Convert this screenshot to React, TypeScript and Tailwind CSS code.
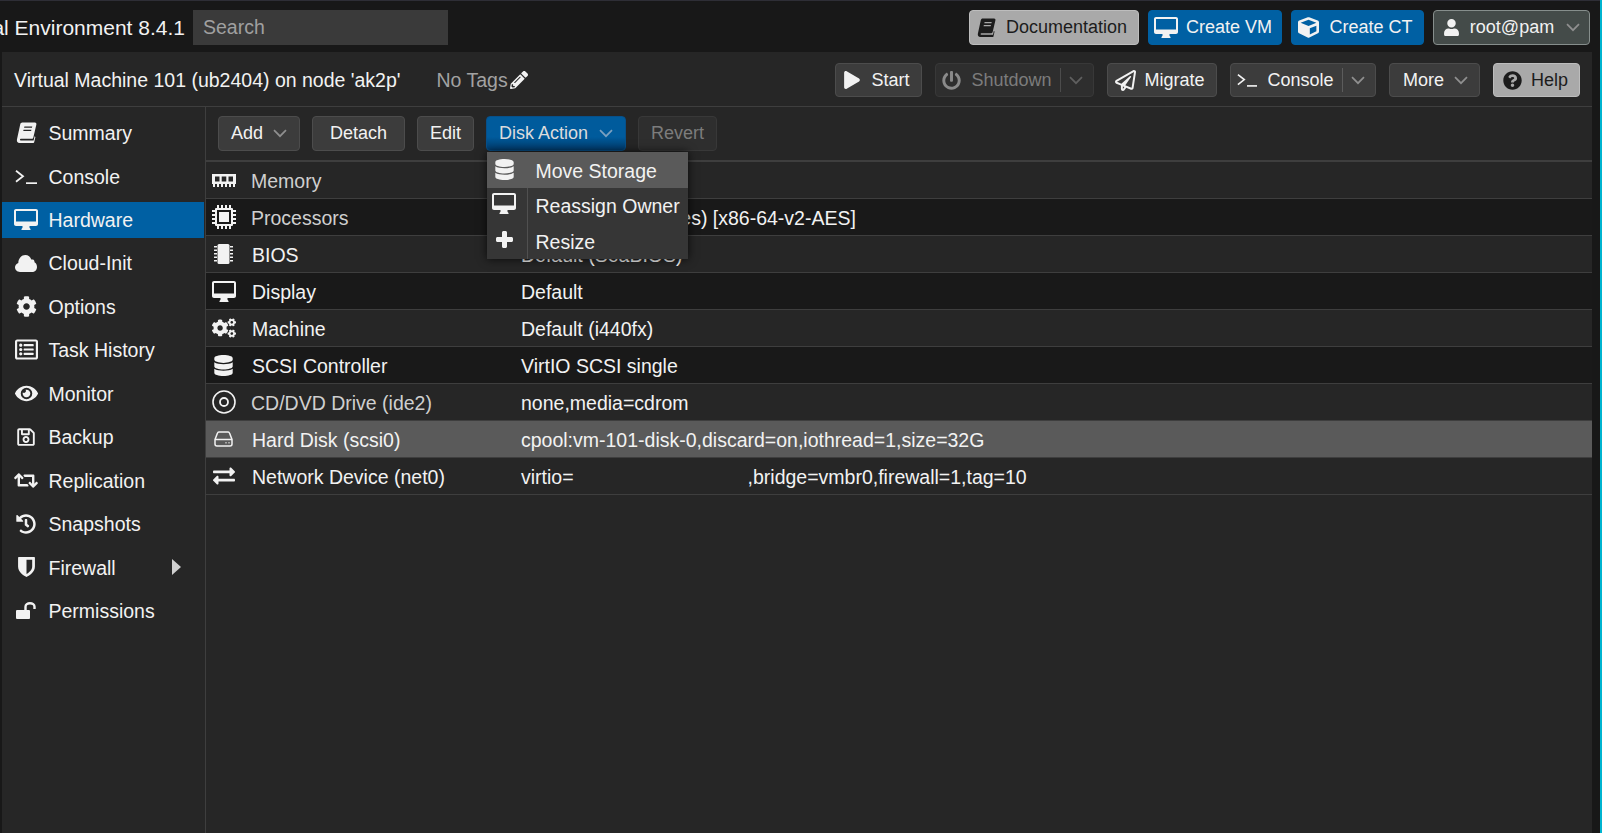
import type { ReactNode } from "react";
import {
  FaCogs, FaCube, FaCog, FaDatabase, FaEye, FaExchangeAlt, FaHistory, FaPencilAlt, FaPlay,
  FaPowerOff, FaQuestionCircle, FaRegListAlt, FaRegPaperPlane, FaRegSave, FaRetweet, FaUser,
} from "react-icons/fa";

function Chevron({ className = "text-[#8f8f8f]" }: { className?: string }) {
  return (
    <svg width="14" height="9" viewBox="0 0 14 9" fill="none" stroke="currentColor" strokeWidth="1.7" className={className}>
      <path d="M1 1.2l6 6 6-6" />
    </svg>
  );
}

function BookIcon({ size = 21 }: { size?: number }) {
  return (
    <svg width={size} height={size} viewBox="0 0 20 20" fill="currentColor">
      <path fillRule="evenodd" d="M6 .5h12c1 0 1.6.8 1.4 1.8l-2.9 12.5c-.2.8-.6 1.2-1.3 1.2H4.6c-1 0-1.2 1.6 0 1.6h12.2l.9-4 .8.6-1.2 5.2c-.1.5-.4.6-.8.6H3.4C1.600 20 .5 18.500.9 16.600L4 2.300C4.300 1.200 5 .5 6 .5zM8 4.200l-.3 1.300h7.500l.3-1.300H8zM7.200 7.300l-.3 1.300h7.500l.3-1.300H7.200z" />
    </svg>
  );
}

function TerminalIcon({ size = 22 }: { size?: number }) {
  return (
    <svg width={size} height={size * 0.7} viewBox="0 0 22 15" fill="none" stroke="currentColor" strokeWidth="1.8">
      <path d="M1 1.500l7 5.500-7 5.500" />
      <path d="M11 14h11" />
    </svg>
  );
}

function DesktopIcon({ size = 24 }: { size?: number }) {
  return (
    <svg width={size} height={size * 0.875} viewBox="0 0 24 21" fill="currentColor">
      <path fillRule="evenodd" d="M2 0h20c1.100 0 2 .9 2 2v13c0 1.100-.9 2-2 2h-6.500v1.700l1 1.300v1H7.500v-1l1-1.300V17H2c-1.100 0-2-.9-2-2V2C0 .9.900 0 2 0zm0 2v10.500h20V2H2z" />
    </svg>
  );
}

function CloudIcon() {
  return (
    <svg width="22" height="17" viewBox="0 0 22 17" fill="currentColor">
      <path d="M5 17C2.200 17 0 14.900 0 12.300c0-2.100 1.300-3.800 3.300-4.400C3.500 3.500 6.500 0 10.300 0c2.900 0 5.200 1.800 6 4.600 .5-.2 1-.3 1.500-.1 1.200.3 1.800 1.400 1.700 2.700C21 8 22 9.800 22 11.900 22 14.800 19.800 17 17 17H5z" />
    </svg>
  );
}

function ShieldIcon() {
  return (
    <svg width="17" height="20" viewBox="0 0 16 19" fill="currentColor">
      <path fillRule="evenodd" d="M.6 0h14.800c.3 0 .6.300.6.600V9c0 5-5 8.500-8 10C5 17.500 0 14 0 9V.6C0 .3.300 0 .6 0zM8 2.600v13.600c2.500-1.500 5.400-4 5.400-7.200V2.600H8z" />
    </svg>
  );
}

function UnlockIcon() {
  return (
    <svg width="21" height="17" viewBox="0 0 21 17" fill="currentColor">
      <rect x="0" y="8" width="14" height="9" rx="1" />
      <path d="M9.500 9V4.800a4.500 3.600 0 0 1 9 0V7" fill="none" stroke="currentColor" strokeWidth="2.400" />
    </svg>
  );
}

function DiskIcon() {
  return (
    <svg width="19" height="16" viewBox="0 0 19 16" fill="none" stroke="currentColor" strokeWidth="1.500">
      <path d="M1 8.500L3.500 2c.2-.6.700-1 1.300-1h9.400c.6 0 1.100.4 1.300 1L18 8.500V13c0 1.100-.9 2-2 2H3c-1.100 0-2-.9-2-2V8.500zM1 8.500h17" />
      <path d="M11.500 11.800h1M14.500 11.800h1" />
    </svg>
  );
}

function PlusIcon() {
  return (
    <svg width="17" height="17" viewBox="0 0 17 17" fill="currentColor">
      <path d="M7.500 0h2c.8 0 1.500.7 1.500 1.500V6h4.500c.8 0 1.500.7 1.500 1.500v2c0 .8-.7 1.500-1.500 1.500H11v4.500c0 .8-.7 1.500-1.500 1.500h-2C6.700 17 6 16.300 6 15.500V11H1.500C.7 11 0 10.300 0 9.500v-2C0 6.700.7 6 1.500 6H6V1.500C6 .7 6.700 0 7.500 0z" />
    </svg>
  );
}

function MemoryIcon() {
  return (
    <svg width="24" height="13" viewBox="0 0 24 13" fill="currentColor">
      <path fillRule="evenodd" d="M0 0h24v10H0V0zm3 2.500v5h4.500v-5H3zm6.700 0v5h4.600v-5H9.700zm6.800 0v5H21v-5h-4.500z" />
      <path d="M1 10h2v3H1zM5 10h2v3H5zM9 10h2v3H9zM13 10h2v3h-2zM17 10h2v3h-2zM21 10h2v3h-2z" />
    </svg>
  );
}

function CpuIcon() {
  return (
    <svg width="24" height="24" viewBox="0 0 24 24" fill="currentColor">
      <path fillRule="evenodd" d="M4 3h16a1 1 0 0 1 1 1v16a1 1 0 0 1-1 1H4a1 1 0 0 1-1-1V4a1 1 0 0 1 1-1zm1 2v14h14V5H5z" />
      <path d="M7 7h10v10H7z" />
      <path d="M5 0h2v3H5zM9 0h2v3H9zM13 0h2v3h-2zM17 0h2v3h-2zM5 21h2v3H5zM9 21h2v3H9zM13 21h2v3h-2zM17 21h2v3h-2zM0 5h3v2H0zM0 9h3v2H0zM0 13h3v2H0zM0 17h3v2H0zM21 5h3v2h-3zM21 9h3v2h-3zM21 13h3v2h-3zM21 17h3v2h-3z" />
    </svg>
  );
}

function ChipIcon() {
  return (
    <svg width="19" height="20" viewBox="0 0 19 20" fill="currentColor">
      <rect x="3.500" y="0" width="12" height="20" rx="1.500" />
      <path d="M0 2h3v1.500H0zM0 5.500h3V7H0zM0 9h3v1.500H0zM0 12.500h3V14H0zM0 16h3v1.500H0zM16 2h3v1.500h-3zM16 5.500h3V7h-3zM16 9h3v1.500h-3zM16 12.500h3V14h-3zM16 16h3v1.500h-3z" />
    </svg>
  );
}

function DiscIcon() {
  return (
    <svg width="24" height="24" viewBox="0 0 24 24" fill="none" stroke="currentColor" strokeWidth="1.600">
      <circle cx="12" cy="12" r="11" />
      <circle cx="12" cy="12" r="4" strokeWidth="1.800" />
    </svg>
  );
}

type BtnProps = { w: string; children: ReactNode; kind?: "plain" | "off" | "gray" | "blue" | "user" | "action"; h?: string };

function Btn({ w, children, kind = "plain", h = "h-[35px]" }: BtnProps) {
  const look = {
    plain: "bg-[#3c3c3c] border-[#4c4c4c] text-[#f2f2f2]",
    off: "bg-[#2e2e2e] border-[#383838] text-[#7c7c7c]",
    gray: "bg-[#a9a9a9] border-[#bdbdbd] text-[#1c1c1c]",
    blue: "bg-[#0060a3] border-[#0060a3] text-[#f2f2f2]",
    user: "bg-[#444b49] border-[#868e8c] text-[#f2f2f2]",
    action: "bg-gradient-to-b from-[#005b9c] from-60% to-[#003c6e] border-[#07508a] text-[#dcdcdc]",
  }[kind];
  return <div className={`${w} ${h} ${look} flex shrink-0 items-center justify-center rounded-[4px] border text-[18px]`}>{children}</div>;
}

const navItems: { label: string; icon: ReactNode; active?: boolean; arrow?: boolean }[] = [
  { label: "Summary", icon: <BookIcon /> },
  { label: "Console", icon: <TerminalIcon /> },
  { label: "Hardware", icon: <DesktopIcon />, active: true },
  { label: "Cloud-Init", icon: <CloudIcon /> },
  { label: "Options", icon: <FaCog size={21} /> },
  { label: "Task History", icon: <FaRegListAlt size={23} /> },
  { label: "Monitor", icon: <FaEye size={23} /> },
  { label: "Backup", icon: <FaRegSave size={20} /> },
  { label: "Replication", icon: <FaRetweet size={25} /> },
  { label: "Snapshots", icon: <FaHistory size={20} /> },
  { label: "Firewall", icon: <ShieldIcon />, arrow: true },
  { label: "Permissions", icon: <UnlockIcon /> },
];

const rows: { name: string; value: ReactNode; icon: ReactNode; dim?: boolean; dark?: boolean; selected?: boolean }[] = [
  { name: "Memory", value: "4.00 GiB", icon: <MemoryIcon />, dim: true },
  { name: "Processors", value: "2 (1 sockets, 2 cores) [x86-64-v2-AES]", icon: <CpuIcon />, dim: true, dark: true },
  { name: "BIOS", value: "Default (SeaBIOS)", icon: <ChipIcon /> },
  { name: "Display", value: "Default", icon: <DesktopIcon />, dark: true },
  { name: "Machine", value: "Default (i440fx)", icon: <FaCogs size={24} /> },
  { name: "SCSI Controller", value: "VirtIO SCSI single", icon: <FaDatabase size={21} />, dark: true },
  { name: "CD/DVD Drive (ide2)", value: "none,media=cdrom", icon: <DiscIcon />, dim: true },
  { name: "Hard Disk (scsi0)", value: "cpool:vm-101-disk-0,discard=on,iothread=1,size=32G", icon: <DiskIcon />, selected: true },
  {
    name: "Network Device (net0)",
    value: (
      <>
        virtio=<span className="inline-block w-[174px]" />,bridge=vmbr0,firewall=1,tag=10
      </>
    ),
    icon: <FaExchangeAlt size={22} />,
  },
];

const menuItems = [
  { label: "Move Storage", icon: <FaDatabase size={21} />, hover: true },
  { label: "Reassign Owner", icon: <DesktopIcon />, up: true },
  { label: "Resize", icon: <PlusIcon />, up: true },
];

export default function App() {
  return (
    <div className="flex h-[833px] w-[1602px] overflow-hidden bg-[#181818] text-[19.5px] text-[#f2f2f2] [font-family:'Liberation_Sans',Arial,sans-serif]">
      <div className="flex min-w-0 flex-1 flex-col">
        <header className="flex h-[52px] shrink-0 items-center border-t border-[#2e2e36] pr-[10px] pt-[2px]">
          <div className="flex w-[185px] shrink-0 justify-end overflow-hidden whitespace-nowrap text-[21px]">Proxmox Virtual Environment 8.4.1</div>
          <div className="ml-[8px] flex h-[35px] w-[255px] items-center bg-[#3a3a3a] pl-[10px] pt-px text-[#a0a0a0]">Search</div>
          <div className="ml-auto flex items-center gap-[9px]">
            <Btn w="w-[170px] pr-[4px]" kind="gray">
              <span className="mr-[10px]"><BookIcon size={19} /></span>Documentation
            </Btn>
            <Btn w="w-[134px] pr-[4px]" kind="blue">
              <span className="mr-[8px]"><DesktopIcon /></span>Create VM
            </Btn>
            <Btn w="w-[133px] pr-[4px]" kind="blue">
              <span className="mr-[10px]"><FaCube size={21} /></span>Create CT
            </Btn>
            <Btn w="w-[157px]" kind="user">
              <span className="mr-[10px]"><FaUser size={17} /></span>root@pam<span className="ml-[12px]"><Chevron /></span>
            </Btn>
          </div>
        </header>

        <main className="ml-[2px] mr-[8px] flex min-h-0 flex-1 flex-col bg-[#262626]">
          <div className="flex h-[55px] shrink-0 items-center border-b border-[#3e3e3e] pl-[12px] pr-[12px] pt-[2px]">
            <span className="pt-[2px]">Virtual Machine 101 (ub2404) on node 'ak2p'</span>
            <span className="ml-[36px] pt-[2px] text-[#a2a2a2]">No Tags</span>
            <FaPencilAlt size={18} className="ml-[2px]" />
            <div className="ml-auto flex items-center gap-[13px]">
              <Btn w="w-[87px] pr-[4px]" h="h-[34px]"><FaPlay size={18} className="mr-[10px]" />Start</Btn>
              <Btn w="w-[159px] pr-[4px]" h="h-[34px]" kind="off">
                <FaPowerOff size={19} className="mr-[10px] text-[#8a8a8a]" />Shutdown
                <span className="mx-[8px] h-[24px] w-px bg-[#4c4c4c]" /><Chevron className="text-[#5f5f5f]" />
              </Btn>
              <Btn w="w-[110px] pr-[4px]" h="h-[34px]"><FaRegPaperPlane size={21} className="mr-[8px]" />Migrate</Btn>
              <Btn w="w-[146px] pr-[4px]" h="h-[34px]">
                <span className="mr-[10px]"><TerminalIcon size={20} /></span>Console
                <span className="mx-[8px] h-[24px] w-px bg-[#5c5c5c]" /><Chevron />
              </Btn>
              <Btn w="w-[91px] pl-[2px]" h="h-[34px]">More<span className="ml-[10px]"><Chevron /></span></Btn>
              <Btn w="w-[87px] pr-[2px]" h="h-[34px]" kind="gray"><FaQuestionCircle size={19} className="mr-[9px]" />Help</Btn>
            </div>
          </div>

          <div className="flex min-h-0 flex-1">
            <nav className="flex w-[204px] shrink-0 flex-col gap-[7.45px] border-r border-[#3e3e3e] pr-px pt-[7.8px]">
              {navItems.map((item) => (
                <div key={item.label} className={`flex h-[36px] shrink-0 items-center ${item.active ? "bg-[#0060a3]" : ""}`}>
                  <div className="ml-[12px] flex w-[24px] shrink-0 justify-center">{item.icon}</div>
                  <span className="ml-[10.5px] pt-[2px]">{item.label}</span>
                  {item.arrow && (
                    <svg width="9" height="16" viewBox="0 0 9 16" fill="currentColor" className="ml-auto mr-[23px] text-[#d0d0d0]">
                      <path d="M0 0l9 8-9 8z" />
                    </svg>
                  )}
                </div>
              ))}
            </nav>

            <section className="min-w-0 flex-1">
              <div className="flex h-[55px] items-center gap-[12px] border-b-2 border-[#3e3e3e] pl-[12px]">
                <Btn w="w-[82px]">Add<span className="ml-[10px]"><Chevron /></span></Btn>
                <Btn w="w-[93px]">Detach</Btn>
                <Btn w="w-[57px]">Edit</Btn>
                <div className="relative">
                  <Btn w="w-[140px]" kind="action">Disk Action<span className="ml-[11px]"><Chevron className="text-[#7ba0c0]" /></span></Btn>
                  <div className="absolute left-[1px] top-[36px] z-10 w-[201px] bg-[#363636] shadow-[0_0_9px_rgba(0,0,0,0.75)]">
                    {menuItems.map((item) => (
                      <div key={item.label} className={`flex h-[35.67px] items-center ${item.hover ? "bg-[#5a5a5a]" : ""}`}>
                        <div className={`flex w-[34px] justify-center ${item.up ? "-mt-[3px]" : ""}`}>{item.icon}</div>
                        <div className={`ml-[6px] flex h-full flex-1 items-center border-l pl-[7.5px] pt-[3px] ${item.hover ? "border-transparent" : "border-[#505050]"}`}>
                          <span className="whitespace-nowrap">{item.label}</span>
                        </div>
                      </div>
                    ))}
                  </div>
                </div>
                <Btn w="w-[79px]" kind="off">Revert</Btn>
              </div>

              {rows.map((row) => (
                <div
                  key={row.name}
                  className={`flex h-[37px] items-center border-b border-[#3e3e3e] ${row.selected ? "bg-[#5a5a5a]" : row.dark ? "bg-[#191919]" : ""}`}
                >
                  <div className="flex w-[35px] shrink-0 justify-center">{row.icon}</div>
                  <div className={`ml-[11px] w-[269px] shrink-0 pt-[4px] ${row.dim ? "-translate-x-px text-[#cfcfcf]" : ""}`}>{row.name}</div>
                  <div className="whitespace-nowrap pt-[4px]">{row.value}</div>
                </div>
              ))}
            </section>
          </div>
        </main>
      </div>
      <div className="w-[2px] shrink-0 bg-[#00b4d0]" />
    </div>
  );
}
